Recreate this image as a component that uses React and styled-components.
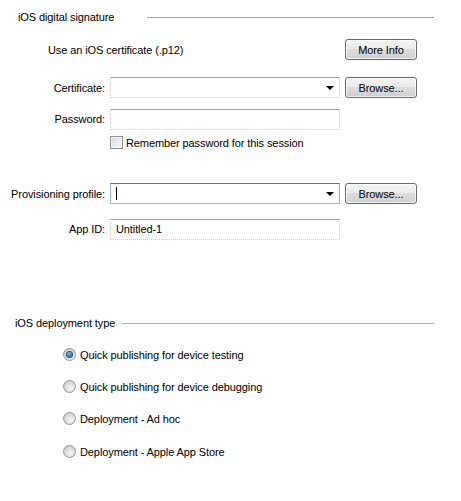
import React from "react";
import styled, { createGlobalStyle } from "styled-components";

const GlobalStyle = createGlobalStyle`
  html, body {
    margin: 0;
    padding: 0;
    background: #ffffff;
  }
  body {
    font-family: "Liberation Sans", Arial, sans-serif;
    font-size: 11px;
    letter-spacing: -0.1px;
    color: #000000;
  }
`;

const Page = styled.div`
  width: 461px;
  height: 501px;
  display: flex;
  flex-direction: column;
  box-sizing: border-box;
  overflow: hidden;
`;

const SectionHeader = styled.div`
  display: flex;
  align-items: center;
  height: 14px;
  margin-top: ${props => props.top}px;
  padding-left: ${props => props.indent}px;
  width: 434px;
  box-sizing: border-box;
`;

const HeaderText = styled.span`
  white-space: nowrap;
  line-height: 14px;
`;

const HeaderLine = styled.div`
  flex: 1;
  height: 1px;
  margin-left: ${props => props.gap}px;
  background: ${props => props.color || "#a0a0a0"};
`;

const FormRow = styled.div`
  display: grid;
  grid-template-columns: 105px 230px 72px;
  column-gap: 5px;
  align-items: center;
  margin-top: ${props => props.top}px;
  height: ${props => props.height || 21}px;
`;

const Label = styled.label`
  text-align: right;
  white-space: nowrap;
`;

const Note = styled.span`
  grid-column: 1 / span 2;
  padding-left: 48px;
  white-space: nowrap;
`;

const Field = styled.div`
  position: relative;
  height: 21px;
  box-sizing: border-box;
  display: flex;
  align-items: center;
  padding: 0 5px;
  background: #ffffff;
  border: 1px dotted ${props => (props.focused ? "#8cbde8" : "#c6cedb")};
  border-top: 1px solid ${props => (props.focused ? "#3d7bad" : "#a3a3a3")};
  ${props => props.focused && "border-left-style: solid; border-right-style: solid; border-bottom-style: solid;"}
`;

const FieldText = styled.span`
  white-space: nowrap;
`;

const Caret = styled.span`
  display: inline-block;
  width: 1px;
  height: 13px;
  background: #000000;
`;

const DropArrow = styled.span`
  position: absolute;
  right: 5px;
  top: 8px;
  width: 0;
  height: 0;
  border-left: 4px solid transparent;
  border-right: 4px solid transparent;
  border-top: 4px solid #000000;
`;

const Button = styled.button`
  grid-column: 3;
  height: 21px;
  width: 72px;
  padding: 0;
  box-sizing: border-box;
  font-family: inherit;
  font-size: 11px;
  letter-spacing: inherit;
  color: #000000;
  border: 1px solid #6a6a6a;
  border-radius: 3px;
  background: linear-gradient(#f4f4f4 0%, #ebebeb 45%, #dddddd 50%, #cfcfcf 100%);
  box-shadow: inset 0 0 0 1px rgba(255, 255, 255, 0.7);
  cursor: default;
`;

const CheckRow = styled.div`
  display: flex;
  align-items: center;
  gap: 3px;
  margin-top: ${props => props.top}px;
  margin-left: 110px;
  height: 13px;
`;

const CheckBox = styled.span`
  width: 13px;
  height: 13px;
  box-sizing: border-box;
  border: 1px solid #8e8f8f;
  background: linear-gradient(135deg, #d6d6d6, #fbfbfb);
  box-shadow: inset 0 0 0 1px #f4f4f4;
`;

const RadioList = styled.div`
  display: flex;
  flex-direction: column;
  margin-top: 18px;
  padding-left: 63px;
`;

const RadioRow = styled.div`
  display: flex;
  align-items: center;
  gap: 4px;
  height: 13px;
  margin-top: ${props => props.top || 0}px;
`;

const Radio = styled.span`
  width: 13px;
  height: 13px;
  box-sizing: border-box;
  border-radius: 50%;
  border: 1px solid #959595;
  background: radial-gradient(circle at 60% 65%, #f6f6f6 0%, #d2d2d2 70%, #c2c2c2 100%);
  display: flex;
  align-items: center;
  justify-content: center;
  &::after {
    content: "";
    display: ${props => (props.checked ? "block" : "none")};
    width: 5px;
    height: 5px;
    border-radius: 50%;
    background: radial-gradient(circle at 40% 35%, #7fc4f6, #1a5a9a 80%);
    box-shadow: 0 0 0 1px #1d4e7c;
  }
`;

const deployOptions = [
  { text: "Quick publishing for device testing", checked: true, top: 0 },
  { text: "Quick publishing for device debugging", top: 19 },
  { text: "Deployment - Ad hoc", top: 19 },
  { text: "Deployment - Apple App Store", top: 20 },
];

export default function App() {
  return (
    <Page>
      <GlobalStyle />
      <SectionHeader top={10} indent={18}>
        <HeaderText>iOS digital signature</HeaderText>
        <HeaderLine gap={33} />
      </SectionHeader>

      <FormRow top={15}>
        <Note>Use an iOS certificate (.p12)</Note>
        <Button>More Info</Button>
      </FormRow>

      <FormRow top={17}>
        <Label>Certificate:</Label>
        <Field>
          <DropArrow />
        </Field>
        <Button>Browse...</Button>
      </FormRow>

      <FormRow top={10} height={22}>
        <Label>Password:</Label>
        <Field />
      </FormRow>

      <CheckRow top={6}>
        <CheckBox />
        <span>Remember password for this session</span>
      </CheckRow>

      <FormRow top={34}>
        <Label>Provisioning profile:</Label>
        <Field focused>
          <Caret />
          <DropArrow />
        </Field>
        <Button>Browse...</Button>
      </FormRow>

      <FormRow top={14} height={22}>
        <Label>App ID:</Label>
        <Field>
          <FieldText>Untitled-1</FieldText>
        </Field>
      </FormRow>

      <SectionHeader top={76} indent={15}>
        <HeaderText>iOS deployment type</HeaderText>
        <HeaderLine gap={7} color="#a8a8a8" />
      </SectionHeader>

      <RadioList>
        {deployOptions.map(option => (
          <RadioRow key={option.text} top={option.top}>
            <Radio checked={option.checked} />
            <span>{option.text}</span>
          </RadioRow>
        ))}
      </RadioList>
    </Page>
  );
}
